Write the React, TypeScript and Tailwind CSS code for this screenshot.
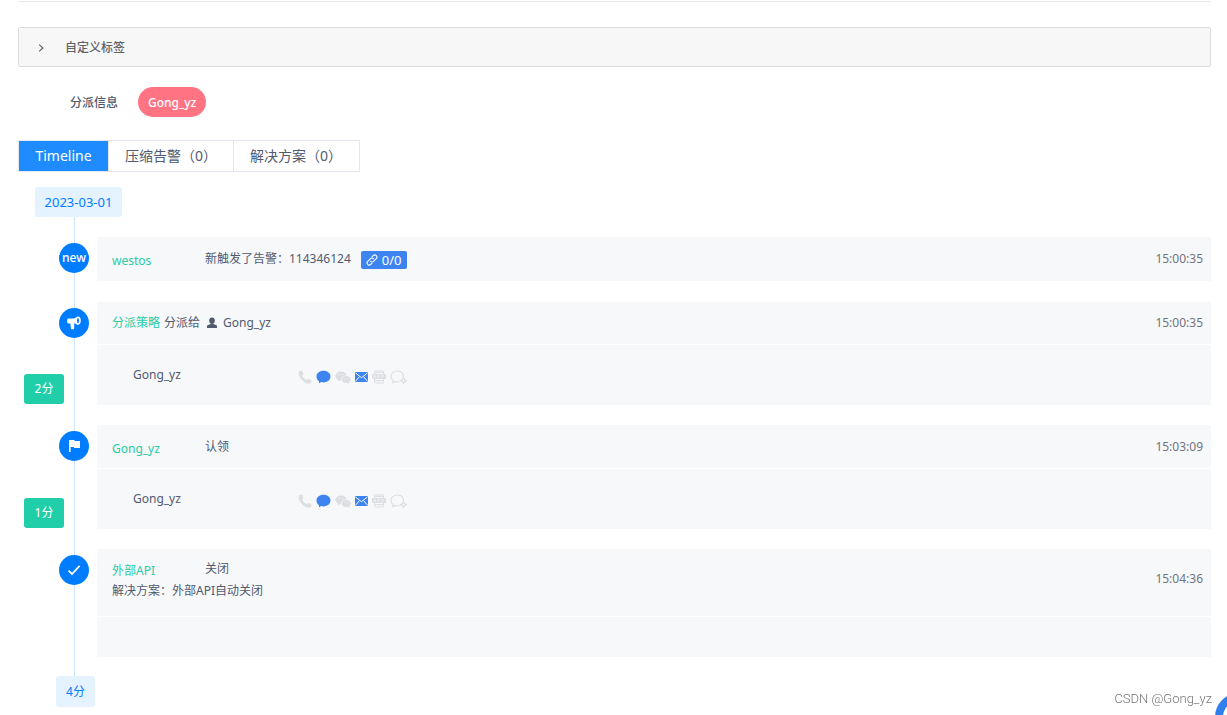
import type { ReactNode } from "react";

const svgBase = "block shrink-0";

function ChevronIcon() {
  return (
    <svg className={svgBase} width="12" height="12" viewBox="0 0 12 12" fill="none" stroke="#606266" strokeWidth="1.2">
      <path d="M4.2 2.6 7.9 6 4.2 9.4" />
    </svg>
  );
}

function LinkIcon() {
  return (
    <svg className={svgBase} width="12" height="12" viewBox="0 0 24 24" fill="none" stroke="currentColor" strokeWidth="2.2" strokeLinecap="round">
      <path d="M9 14.500a4.200 4.200 0 0 0 6 .4l5.500-5.500a4.200 4.200 0 0 0-6-6l-2.500 2.500" />
      <path d="M15 9.500a4.200 4.200 0 0 0-6-.4L3.500 14.600a4.200 4.200 0 0 0 6 6L12 18.100" />
    </svg>
  );
}

function HornIcon() {
  return (
    <svg className={svgBase} width="16" height="16" viewBox="0 0 16 16">
      <path fill="#fff" d="M1.200 4.800Q1.200 3.400 2.600 3.400H7.400C9 3.200 10.400 2.400 11.400 1.400Q14.800 1.200 14.800 5.500T11.400 9.900C10.400 9 9.300 8.500 8.200 8.300V13.300Q8.200 14.200 7.300 14.200H5.900Q5 14.200 4.900 13.300L4.400 8.400H2.600Q1.200 8.400 1.200 7Z" />
      <ellipse cx="12" cy="5.600" rx="1" ry="2.700" fill="#007dff" />
    </svg>
  );
}

function FlagIcon() {
  return (
    <svg className={svgBase} width="16" height="16" viewBox="0 0 16 16" fill="#fff">
      <path d="M3 2h5.500v1H14v7H8V9H4.600v5H3Z" />
    </svg>
  );
}

function CheckIcon() {
  return (
    <svg className={svgBase} width="16" height="16" viewBox="0 0 16 16" fill="none" stroke="#fff" strokeWidth="1.800">
      <path d="M2.600 8.600 6 12 13.600 3.900" />
    </svg>
  );
}

function PersonIcon() {
  return (
    <svg className={svgBase} width="12" height="12" viewBox="0 0 12 12" fill="#515a6e">
      <ellipse cx="6" cy="3.600" rx="2.800" ry="3.200" />
      <path d="M4.700 6.300h2.600v.7l2.700 1q1 .4 1 1.500v1.500H1V9.500Q1 8.400 2 8l2.700-1Z" />
    </svg>
  );
}

function PhoneIcon() {
  return (
    <svg className={svgBase} width="14" height="14" viewBox="0 0 14 14" fill="#dcdee2">
      <path d="M1.500 1.100C2.500.1 3.900.3 4.500 1.500l.8 1.700c.3.800-.1 1.300-.7 1.900-.5.500-.3 1 .3 1.900.7 1 1.500 1.800 2.500 2.500.8.500 1.300.6 1.800.1.600-.6 1.200-.9 1.900-.5l1.700 1c1.100.7 1 1.700.1 2.600-1.500 1.400-4 1.100-6.700-.8C3.700 10.200 1.500 7.600.8 4.800.4 3.200.6 2 1.500 1.100Z" />
    </svg>
  );
}

function BubbleIcon() {
  return (
    <svg className={svgBase} width="15" height="14" viewBox="0 0 15 14" fill="#3d84f1">
      <path d="M7.500.8C11.600.8 14.500 3.300 14.500 6.600s-2.900 5.800-7 5.800c-.8 0-1.600-.1-2.300-.3L2.900 13.300 3 11.300C1.400 10.200.5 8.600.5 6.600.5 3.300 3.400.8 7.500.8Z" />
    </svg>
  );
}

function WechatIcon() {
  return (
    <svg className={svgBase} width="16" height="14" viewBox="0 0 16 14">
      <path fill="#dcdee2" d="M6.200 1.500c3 0 5.300 1.800 5.600 4-3.100-.2-5.600 1.700-5.600 4.200l.1.800-1.700-.2-2.100 1.100.5-1.700C1.500 8.900.5 7.600.5 6 .5 3.500 3 1.500 6.200 1.500Z" />
      <path fill="#dcdee2" d="M11.300 6.100c2.500 0 4.400 1.600 4.400 3.500 0 1.100-.7 2.100-1.700 2.800l.4 1.300-1.600-.8-1.500.2c-2.500 0-4.400-1.600-4.400-3.500s1.900-3.500 4.400-3.500Z" />
      <g fill="#f7f8fa">
        <circle cx="4.300" cy="4.600" r=".6" />
        <circle cx="8" cy="4.600" r=".6" />
        <circle cx="9.800" cy="8.700" r=".5" />
        <circle cx="12.800" cy="8.700" r=".5" />
      </g>
    </svg>
  );
}

function MailIcon() {
  return (
    <svg className={svgBase} width="13" height="14" viewBox="0 0 13 14">
      <path fill="#3d84f1" d="M0 2h13v10H0Z" />
      <path fill="none" stroke="#f7f8fa" strokeWidth="1" d="m.3 2.800 6.200 4.900 6.200-4.900M.3 11.500l4-4.700m8.400 4.700-4-4.700" />
    </svg>
  );
}

function AppIcon() {
  return (
    <svg className={svgBase} width="14" height="14" viewBox="0 0 14 14">
      <path fill="none" stroke="#dcdee2" strokeWidth="1" d="M2.500 4V1.500q0-.5.500-.5h8q.5 0 .5.500V4M2.500 9v3.500q0 .5.500.5h8q.5 0 .5-.5V9M2.500 10.500h9M2.500 2.500h9" />
      <rect y="4" width="14" height="5" rx="1" fill="#dcdee2" />
      <path fill="none" stroke="#f7f8fa" strokeWidth=".5" d="M1.300 8.200 2.700 5l1.400 3.200M1.900 7.200h1.600M5.700 8.300V5.200h1.500q1.200.9 0 1.800H5.700M9.800 8.300V5.200h1.500q1.200.9 0 1.800H9.800" />
      <circle cx="7" cy="11.800" r=".6" fill="#dcdee2" />
    </svg>
  );
}

function ChatPlusIcon() {
  return (
    <svg className={svgBase} width="17" height="14" viewBox="0 0 17 14" fill="none" stroke="#dcdee2" strokeWidth="1.200">
      <path d="M13.200 7.700C14.400 4 11.600 1 7.700 1 3.800 1 1 3.300 1 6.400c0 1.800.9 3.200 2.300 4.100l-.4 2.200 2.500-1.200c1.400.4 2.800.4 4 0" />
      <path strokeWidth="1.200" d="m13.500 7.700 1 1.900 1.900 1-1.900 1-1 1.900-1-1.900-1.900-1 1.900-1Z" />
    </svg>
  );
}

function NotifyRow() {
  return (
    <div className="mt-px flex h-[60px] bg-[#f7f8fa] pl-9 pt-5">
      <span className="w-[165px] leading-5">Gong_yz</span>
      <div className="flex h-6 items-center gap-1">
        <PhoneIcon />
        <BubbleIcon />
        <WechatIcon />
        <MailIcon />
        <AppIcon />
        <ChatPlusIcon />
      </div>
    </div>
  );
}

type ItemProps = { marker: ReactNode; elapsed?: string; children: ReactNode };

function Item({ marker, elapsed, children }: ItemProps) {
  return (
    <li className="flex">
      <div className="flex w-[79px] shrink-0 flex-col justify-between pb-px pt-[6px]">
        <div className="z-10 ml-[41px] flex size-[30px] items-center justify-center rounded-full bg-[#007dff] text-[12px] font-medium text-white">
          {marker}
        </div>
        {elapsed && (
          <div className="ml-[6px] flex h-[30px] w-10 items-center justify-center rounded-[3px] bg-[#20cfa9] text-white">
            {elapsed}
          </div>
        )}
      </div>
      <div className="min-w-0 grow">{children}</div>
    </li>
  );
}

function Time({ value }: { value: string }) {
  return <time className="ml-auto text-[#6f7480]">{value}</time>;
}

const name = "w-[93px] shrink-0 pt-1 text-[#26cda6]";

export default function App() {
  return (
    <main className="bg-white pl-[18px] pr-4 pt-px font-['Noto_Sans','Noto_Sans_CJK_SC',sans-serif] text-[12px] leading-5 text-[#515a6e]">
      <hr className="border-[#e8eaec]" />
      <button
        type="button"
        className="mt-[25px] flex h-10 w-full items-center gap-[18px] rounded-[2px] border border-[#dcdcdc] bg-[#f7f7f7] pl-4 pt-[2px] text-left font-medium text-[#606266]"
      >
        <ChevronIcon />
        <span>自定义标签</span>
      </button>

      <div className="mt-5 flex h-[30px] items-center gap-5 pl-[52px] font-medium">
        <span className="pt-[2px]">分派信息</span>
        <span className="flex h-full items-center rounded-full bg-[#ff7383] px-[10px] pt-[2px] text-white">Gong_yz</span>
      </div>

      <div role="tablist" className="mt-[23px] flex h-8 w-fit border border-[#e4e7ed] text-[14px]">
        <button type="button" role="tab" aria-selected="true" className="w-[89px] bg-[#1e8cff] text-white">
          Timeline
        </button>
        <button type="button" role="tab" aria-selected="false" className="w-[125px] border-l border-[#e4e7ed] px-4 text-left whitespace-nowrap">
          压缩告警（0）
        </button>
        <button type="button" role="tab" aria-selected="false" className="w-[126px] border-l border-[#e4e7ed] px-4 text-left whitespace-nowrap">
          解决方案（0）
        </button>
      </div>

      <section className="relative mt-[15px]">
        <div className="absolute inset-y-0 left-14 w-px bg-[#cce5ff]" />
        <div className="relative ml-[17px] flex h-[30px] w-[87px] items-center justify-center rounded-[3px] bg-[#e5f2ff] text-[13px] text-[#007dff]">
          2023-03-01
        </div>
        <ul className="relative mb-[19px] mt-5 flex flex-col gap-5">
          <Item marker="new">
            <div className="flex h-[45px] items-center border-b border-white bg-[#f7f8fa] pl-[15px] pr-2">
              <span className={name}>westos</span>
              <span>新触发了告警：114346124</span>
              <span className="ml-[10px] mt-[2px] flex h-[18px] items-center gap-1 rounded-[2px] bg-[#3d84f1] px-[5px] text-[13px] text-white">
                <LinkIcon />
                0/0
              </span>
              <Time value="15:00:35" />
            </div>
          </Item>

          <Item marker={<HornIcon />} elapsed="2分">
            <div className="flex h-[42px] items-center bg-[#f7f8fa] pl-[15px] pr-2">
              <span className="text-[#26cda6]">分派策略</span>
              <span className="ml-1">分派给</span>
              <span className="ml-[6px] flex items-center gap-[5px]">
                <PersonIcon />
                Gong_yz
              </span>
              <Time value="15:00:35" />
            </div>
            <NotifyRow />
          </Item>

          <Item marker={<FlagIcon />} elapsed="1分">
            <div className="flex h-[43px] items-center bg-[#f7f8fa] pl-[15px] pr-2">
              <span className={name}>Gong_yz</span>
              <span>认领</span>
              <Time value="15:03:09" />
            </div>
            <NotifyRow />
          </Item>

          <Item marker={<CheckIcon />}>
            <div className="flex h-[67px] items-center bg-[#f7f8fa] pb-2 pl-[15px] pr-2">
              <div className="flex flex-col">
                <div className="flex items-center">
                  <span className={name}>外部API</span>
                  <span>关闭</span>
                </div>
                <span>解决方案：外部API自动关闭</span>
              </div>
              <Time value="15:04:36" />
            </div>
            <div className="mt-px h-10 bg-[#f7f8fa]" />
          </Item>
        </ul>
        <div className="relative ml-[38px] flex h-[31px] w-[39px] items-center justify-center rounded-[3px] bg-[#e5f2ff] text-[#007dff]">
          4分
        </div>
      </section>

      <div className="fixed bottom-[6px] right-[15px] font-[Roboto,sans-serif] text-[13px] font-light text-[#777777]">
        CSDN @Gong_yz
      </div>
      <button
        type="button"
        aria-label="客服"
        className="fixed -bottom-[26px] -right-[36px] flex size-12 items-center justify-center rounded-full bg-[#2f80ed]"
      >
        <svg className={svgBase} width="32" height="32" viewBox="0 0 32 32" fill="#fff">
          <circle cx="16" cy="16" r="16" />
        </svg>
      </button>
    </main>
  );
}
